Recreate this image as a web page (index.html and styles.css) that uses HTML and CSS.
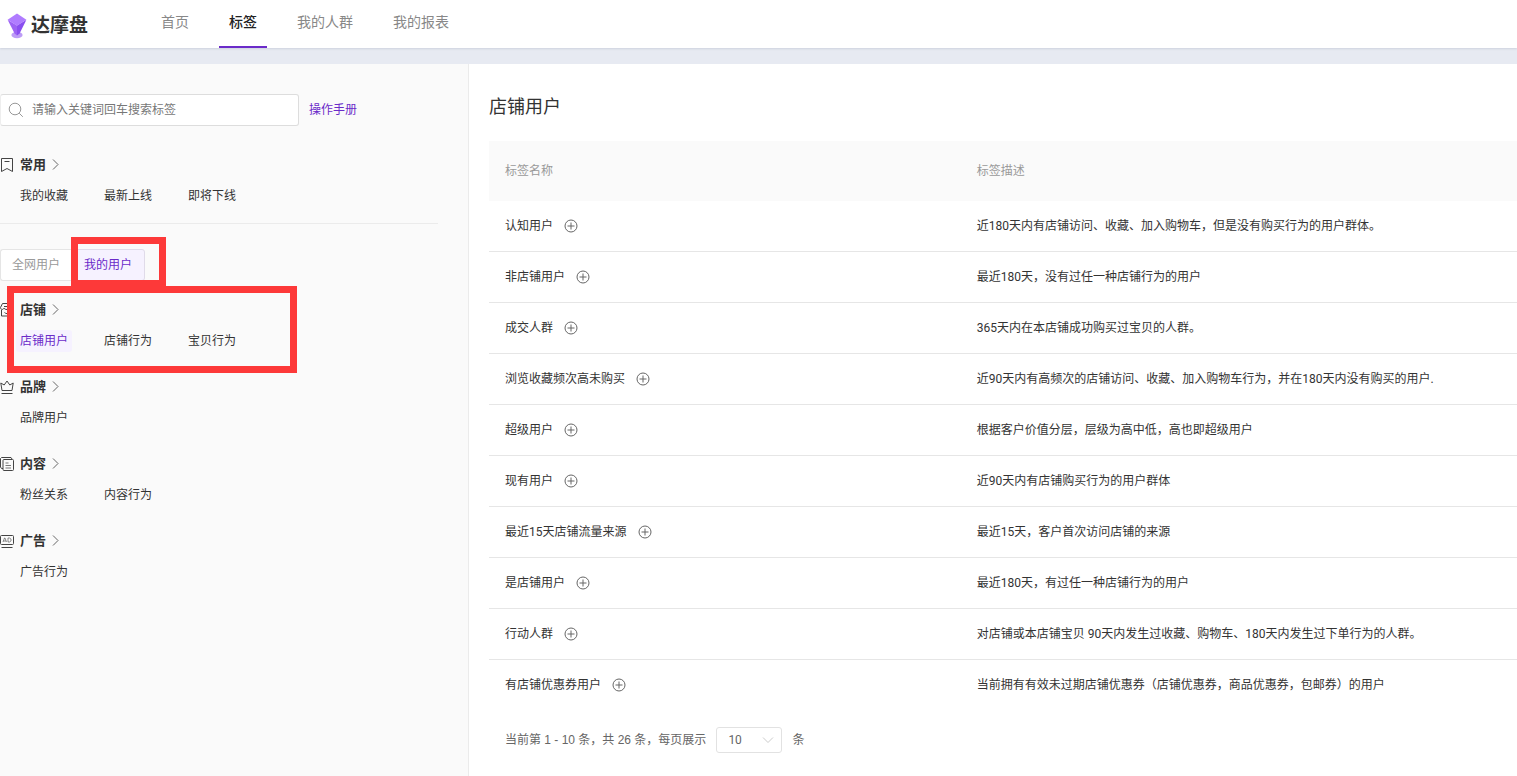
FILE: index.html
```html
<!DOCTYPE html>
<html lang="zh-CN">
<head>
<meta charset="utf-8">
<title>达摩盘</title>
<link rel="stylesheet" href="styles.css">
</head>
<body>
<svg class="defs" aria-hidden="true">
  <symbol id="arrow" viewBox="0 0 8 12"><path d="M1 .500 6 5.500l-5 5"/></symbol>
  <symbol id="plus" viewBox="0 0 14 14"><circle cx="7" cy="7" r="6"/><path d="M7 3.500v7M3.500 7h7"/></symbol>
</svg>
<header class="header">
  <a class="logo" href="#">
    <svg class="logo-mark" viewBox="0 0 20 26" aria-hidden="true">
      <ellipse cx="10" cy="22" rx="5.600" ry="3.200" fill="#bd9cf6"/>
      <path d="M.6 6.800 10 12.500V22.500L7.600 20.500z" fill="#9d63f4"/>
      <path d="M19.400 6.800 10 12.500V22.500l2.600-2z" fill="#8a4ff0"/>
      <path d="M10 .4 19.400 6.800 10 12.800.600 6.800z" fill="#b07cff"/>
    </svg>
    <span class="logo-text">达摩盘</span>
  </a>
  <nav class="nav">
    <a class="nav-item" href="#">首页</a>
    <a class="nav-item nav-active" href="#">标签</a>
    <a class="nav-item" href="#">我的人群</a>
    <a class="nav-item" href="#">我的报表</a>
  </nav>
</header>
<div class="page">
  <aside class="sidebar">
    <div class="search-row">
      <label class="search">
        <svg class="search-icon" viewBox="0 0 16 16" aria-hidden="true"><circle cx="7" cy="7" r="5.800"/><path d="m11.200 11.200 3.600 3.600"/></svg>
        <input class="search-input" type="text" aria-label="搜索标签" placeholder="请输入关键词回车搜索标签">
      </label>
      <a class="manual" href="#">操作手册</a>
    </div>
    <section class="group">
      <h2 class="group-head">
        <svg class="group-icon" viewBox="0 0 14 14"><path d="M1.500.500h11v13L7 10.500l-5.500 3zM4.500 3.500h5"/></svg>常用<svg class="arrow"><use href="#arrow"/></svg>
      </h2>
      <div class="links"><a class="link" href="#">我的收藏</a><a class="link" href="#">最新上线</a><a class="link" href="#">即将下线</a></div>
    </section>
    <hr class="divider">
    <div class="marked">
      <div class="tabs">
        <button class="tab" type="button">全网用户</button>
        <button class="tab tab-active" type="button">我的用户</button>
        <span class="mark mark-tab"></span>
      </div>
      <section class="group">
        <h2 class="group-head">
          <svg class="group-icon" viewBox="0 0 14 14"><path d="M2.500.500h9l2 4c0 2.500-3 2.500-3.500.500-.500 2-5.500 2-6 0-.500 2-3.500 2-3.500-.500zM1.500 7v6h11V7M4 3.500h6M4.500 9.500c1.500 1.500 3.500 1.500 5 0"/></svg>店铺<svg class="arrow"><use href="#arrow"/></svg>
        </h2>
        <div class="links"><a class="link link-active" href="#">店铺用户</a><a class="link" href="#">店铺行为</a><a class="link" href="#">宝贝行为</a></div>
      </section>
      <span class="mark mark-shop"></span>
    </div>
    <section class="group">
      <h2 class="group-head">
        <svg class="group-icon" viewBox="0 0 14 14"><path d="M2 10.500.800 3l3.400 2L7 1l2.800 4 3.400-2-1.200 7.500zM1.500 13.500h11"/></svg>品牌<svg class="arrow"><use href="#arrow"/></svg>
      </h2>
      <div class="links"><a class="link" href="#">品牌用户</a></div>
    </section>
    <section class="group">
      <h2 class="group-head">
        <svg class="group-icon" viewBox="0 0 14 14"><path d="M3 11.500H1.500L.500 10V1.500l1-1H11l1 1.500"/><rect x="3" y="2.500" width="10.500" height="11" rx="1"/><path d="M5.500 6h3M5.500 8.500H11M5.500 11H11" stroke="#777"/></svg>内容<svg class="arrow"><use href="#arrow"/></svg>
      </h2>
      <div class="links"><a class="link" href="#">粉丝关系</a><a class="link" href="#">内容行为</a></div>
    </section>
    <section class="group">
      <h2 class="group-head">
        <svg class="group-icon" viewBox="0 0 14 14"><rect x=".5" y="1.500" width="13" height="9" rx="1"/><path d="M1.500 13.500h11"/><path class="thin" d="m3 8 1.500-4h.500L6.500 8M3.500 7H6M8 4v4h1.500l1.500-1V5L9.500 4z"/></svg>广告<svg class="arrow"><use href="#arrow"/></svg>
      </h2>
      <div class="links"><a class="link" href="#">广告行为</a></div>
    </section>
  </aside>
  <main class="main">
    <h1 class="title">店铺用户</h1>
    <table class="table">
      <thead><tr><th class="col-name">标签名称</th><th>标签描述</th></tr></thead>
      <tbody>
        <tr><td><div class="name">认知用户<button class="add" type="button" aria-label="添加"><svg><use href="#plus"/></svg></button></div></td><td>近180天内有店铺访问、收藏、加入购物车，但是没有购买行为的用户群体。</td></tr>
        <tr><td><div class="name">非店铺用户<button class="add" type="button" aria-label="添加"><svg><use href="#plus"/></svg></button></div></td><td>最近180天，没有过任一种店铺行为的用户</td></tr>
        <tr><td><div class="name">成交人群<button class="add" type="button" aria-label="添加"><svg><use href="#plus"/></svg></button></div></td><td>365天内在本店铺成功购买过宝贝的人群。</td></tr>
        <tr><td><div class="name">浏览收藏频次高未购买<button class="add" type="button" aria-label="添加"><svg><use href="#plus"/></svg></button></div></td><td>近90天内有高频次的店铺访问、收藏、加入购物车行为，并在180天内没有购买的用户.</td></tr>
        <tr><td><div class="name">超级用户<button class="add" type="button" aria-label="添加"><svg><use href="#plus"/></svg></button></div></td><td>根据客户价值分层，层级为高中低，高也即超级用户</td></tr>
        <tr><td><div class="name">现有用户<button class="add" type="button" aria-label="添加"><svg><use href="#plus"/></svg></button></div></td><td>近90天内有店铺购买行为的用户群体</td></tr>
        <tr><td><div class="name">最近15天店铺流量来源<button class="add" type="button" aria-label="添加"><svg><use href="#plus"/></svg></button></div></td><td>最近15天，客户首次访问店铺的来源</td></tr>
        <tr><td><div class="name">是店铺用户<button class="add" type="button" aria-label="添加"><svg><use href="#plus"/></svg></button></div></td><td>最近180天，有过任一种店铺行为的用户</td></tr>
        <tr><td><div class="name">行动人群<button class="add" type="button" aria-label="添加"><svg><use href="#plus"/></svg></button></div></td><td>对店铺或本店铺宝贝 90天内发生过收藏、购物车、180天内发生过下单行为的人群。</td></tr>
        <tr><td><div class="name">有店铺优惠券用户<button class="add" type="button" aria-label="添加"><svg><use href="#plus"/></svg></button></div></td><td>当前拥有有效未过期店铺优惠券（店铺优惠券，商品优惠券，包邮券）的用户</td></tr>
      </tbody>
    </table>
    <div class="pager">
      <label for="size">当前第 1 - 10 条，共 26 条，每页展示</label>
      <span class="select">
        <select class="size" id="size"><option>10</option><option>20</option><option>50</option></select>
        <svg class="caret" viewBox="0 0 12 8"><path d="m1 1.500 5 5 5-5"/></svg>
      </span>
      <span>条</span>
    </div>
  </main>
</div>
</body>
</html>
```
FILE: styles.css
```css
* { box-sizing: border-box; }
body {
  margin: 0;
  min-height: 100vh;
  display: flex;
  flex-direction: column;
  font: 12px/20px Roboto, "Noto Sans CJK SC", sans-serif;
  color: #333;
  background: #fff;
}
a { color: inherit; text-decoration: none; }
button, input, select { font: inherit; color: inherit; }
svg { fill: none; stroke: #444; flex: none; }
.defs { position: absolute; width: 0; height: 0; }

.header {
  position: relative;
  display: flex;
  height: 48px;
  padding-left: 7px;
  background: #fff;
  box-shadow: 0 1px 2px #cdd2dd;
}
.logo { display: flex; align-items: center; gap: 4px; width: 144px; padding-top: 3px; }
.logo-mark { width: 20px; height: 26px; stroke: none; }
.logo-text { font-size: 19px; font-weight: 700; }
.nav { display: flex; gap: 20px; }
.nav-item {
  padding: 0 10px;
  font-size: 14px;
  line-height: 44px;
  color: #888;
  border-bottom: 2px solid transparent;
  height: 48px;
}
.nav-active { color: #222; font-weight: 500; border-color: #6b2bc9; }

.page {
  flex: 1;
  display: flex;
  border-top: 16px solid #e7eaf2;
}
.sidebar {
  flex: none;
  width: 469px;
  padding: 30px 30px 0 0;
  background: #fafafa;
  border-right: 1px solid #ebebeb;
}
.search-row { display: flex; gap: 10px; align-items: center; margin-bottom: 29px; }
.search {
  display: flex;
  align-items: center;
  gap: 8px;
  width: 299px;
  height: 32px;
  padding: 0 7px;
  background: #fff;
  border: 1px solid #ddd;
  border-left-color: #eee;
  border-radius: 3px;
}
.search-icon { width: 16px; height: 16px; stroke: #999; }
.search-input { flex: 1; min-width: 0; padding: 0; border: 0; outline: 0; background: none; }
.search-input::placeholder { color: #777; opacity: 1; }
.manual { color: #6b2bc9; }

.group { margin-bottom: 25px; }
.group-head {
  display: flex;
  align-items: center;
  gap: 6px;
  height: 20px;
  margin: 0 0 10px;
  font-size: 13px;
  font-weight: 700;
}
.group-icon { width: 14px; height: 14px; }
.thin { stroke-width: .6; }
.arrow { width: 8px; height: 12px; stroke: #666; }
.links { display: flex; gap: 28px; padding-left: 16px; }
.link { padding: 0 4px; line-height: 22px; border-radius: 3px; }
.link-active { color: #6b2bc9; background: #f6f2ff; }
.divider { height: 1px; margin: -9px 0 25px; border: 0; background: #ebebeb; }

.marked { position: relative; }
.tabs { position: relative; display: flex; width: max-content; margin-bottom: 19px; }
.tab {
  height: 32px;
  padding: 0 11px;
  color: #999;
  background: #fff;
  border: 1px solid #e5e5e5;
  border-right: 0;
  border-radius: 3px 0 0 3px;
}
.tab-active {
  padding: 0 12px;
  color: #6b2bc9;
  background: #f6f2ff;
  border: 1px solid #e0dbe9;
  border-radius: 0 3px 3px 0;
}
.mark { position: absolute; border: 7px solid #fd3939; pointer-events: none; }
.mark-tab { left: 71px; top: -12px; width: 95px; height: 50px; }
.mark-shop { left: 7px; top: 37px; width: 290px; height: 87px; }

.main { flex: 1; min-width: 0; padding: 30px 0 0 20px; }
.title { margin: 0 0 21px; font-size: 18px; line-height: 26px; font-weight: 400; }
.table { width: 100%; border-collapse: separate; border-spacing: 0; table-layout: fixed; }
.col-name { width: 45.9%; }
.table th {
  height: 60px;
  padding: 0 16px;
  text-align: left;
  font-weight: 400;
  color: #999;
  background: #fafafa;
}
.table td { height: 51px; padding: 0 16px; border-bottom: 1px solid #e6e6e6; }
.table tr:last-child td { border-bottom-color: transparent; }
.name { display: flex; align-items: center; gap: 11px; }
.add { padding: 0; border: 0; background: none; }
.add svg { display: block; width: 14px; height: 14px; stroke: #666; }
.pager { display: flex; align-items: center; gap: 10px; padding: 16px 16px 20px; color: #666; font-family: "Liberation Sans", "Noto Sans CJK SC", sans-serif; }
.select { position: relative; font-family: Roboto, sans-serif; }
.size {
  display: block;
  appearance: none;
  width: 66px;
  height: 26px;
  padding: 0 11px;
  background: #fff;
  border: 1px solid #e2e2e2;
  border-radius: 3px;
}
.caret { position: absolute; right: 8px; top: 9px; width: 12px; height: 8px; stroke: #ccc; pointer-events: none; }
```
